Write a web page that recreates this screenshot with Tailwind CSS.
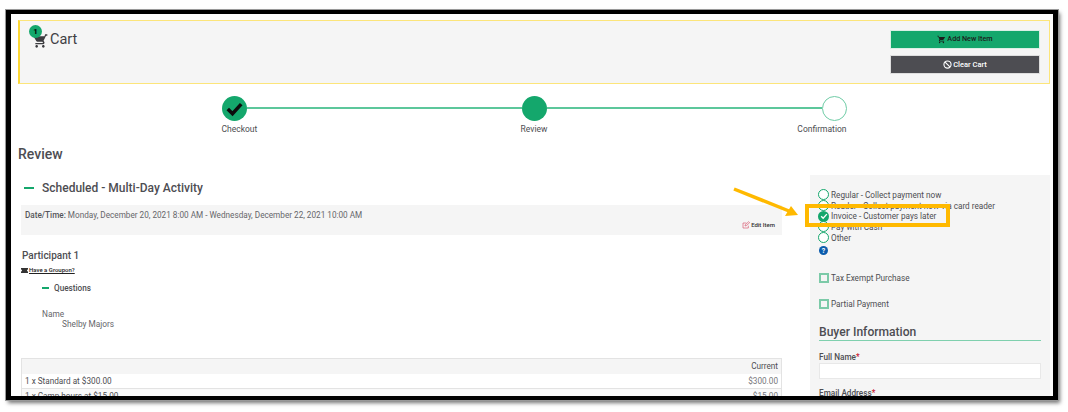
<!DOCTYPE html>
<html lang="en">

<head>
    <meta charset="UTF-8">
    <meta name="viewport" content="width=device-width, initial-scale=1.0">
    <title>Cart - Review</title>
    <script src="https://cdn.jsdelivr.net/npm/@tailwindcss/browser@4"></script>
</head>

<body class="bg-white font-['Roboto',sans-serif] text-[#4d4d52] w-[1068px] h-[412px] overflow-hidden relative">
    <!-- screenshot frame -->
    <div class="absolute left-[6px] top-[10px] w-[1052px] h-[390px] border-x-[5px] border-y-[4px] border-black bg-white overflow-hidden shadow-[2px_3px_4px_rgba(0,0,0,0.55)] outline outline-[#999]">
        <div class="pl-[7px] pr-[3px] pt-[6px]">

            <!-- cart header -->
            <div class="h-[64px] border border-[#fce57a] border-l-2 border-l-[#fdd835] bg-[#f5f5f5] flex justify-between pl-[10px] pr-[9px] pt-[9px]">
                <div class="relative flex items-start pl-[2px] pt-[1px]">
                    <svg class="w-[16px] h-[16px] mt-[2px] fill-[#3c3c40] -scale-x-100" viewBox="0 0 24 24"><path d="M7 18c-1.1 0-2 .9-2 2s.9 2 2 2 2-.9 2-2-.9-2-2-2zM1 2v2h2l3.6 7.6-1.35 2.45C5 15.4 5.8 17 7 17h12v-2H7.4l1-1.9h7.5c.75 0 1.4-.4 1.75-1L21.8 5H5.2l-.9-3H1zm16 16c-1.1 0-2 .9-2 2s.9 2 2 2 2-.9 2-2-.9-2-2-2z"/></svg>
                    <span class="ml-[2px] text-[14.5px] leading-[18px] text-[#3f3f44]">Cart</span>
                    <span class="absolute -left-[1px] -top-[5px] w-[13px] h-[13px] rounded-full bg-[#14a76c] text-[8px] font-bold text-black flex items-center justify-center">1</span>
                </div>
                <div class="w-[150px] flex flex-col gap-[6px]">
                    <div class="h-[19px] bg-[#14a76c] border border-[#d9efe5] flex items-center justify-center gap-[1px] text-[7.2px] font-medium text-[#1b1b1b]">
                        <svg class="w-[9px] h-[9px] fill-[#1b1b1b]" viewBox="0 0 24 24"><path d="M7 18c-1.1 0-2 .9-2 2s.9 2 2 2 2-.9 2-2-.9-2-2-2zM1 2v2h2l3.6 7.6-1.35 2.45C5 15.4 5.8 17 7 17h12v-2H7.4l1-1.9h7.5c.75 0 1.4-.4 1.75-1L21.8 5H5.2l-.9-3H1zm16 16c-1.1 0-2 .9-2 2s.9 2 2 2 2-.9 2-2-.9-2-2-2z"/></svg>
                        Add New Item
                    </div>
                    <div class="h-[19px] bg-[#4d4d52] border border-[#dedede] flex items-center justify-center gap-[1px] text-[7.5px] font-medium text-white">
                        <svg class="w-[9px] h-[9px] fill-none stroke-white stroke-[3]" viewBox="0 0 24 24"><circle cx="12" cy="12" r="9.5"/><path d="M5.5 5.5l13 13"/></svg>
                        Clear Cart
                    </div>
                </div>
            </div>

            <!-- stepper -->
            <div class="flex items-start w-[625px] ml-[203.5px] mt-[12px] text-[8.5px] leading-[10px]">
                <div class="w-[25px] shrink-0 flex flex-col items-start gap-[3px]">
                    <div class="w-[25px] h-[25px] rounded-full bg-[#14a76c] flex items-center justify-center">
                        <svg class="w-[19px] h-[19px] fill-none stroke-[#0c0c0c] stroke-[4.5]" viewBox="0 0 24 24"><path d="M3.5 12.5l6 6L20.5 6.5"/></svg>
                    </div>
                    <span class="whitespace-nowrap">Checkout</span>
                </div>
                <div class="flex-1 h-[2px] mt-[11px] bg-[#5cc79b]"></div>
                <div class="w-[25px] shrink-0 flex flex-col items-center gap-[3px]">
                    <div class="w-[25px] h-[25px] rounded-full bg-[#14a76c]"></div>
                    <span class="whitespace-nowrap">Review</span>
                </div>
                <div class="flex-1 h-[2px] mt-[11px] bg-[#5cc79b]"></div>
                <div class="w-[25px] shrink-0 flex flex-col items-end gap-[3px]">
                    <div class="w-[25px] h-[25px] rounded-full border border-[#6fcca6] bg-white"></div>
                    <span class="whitespace-nowrap">Confirmation</span>
                </div>
            </div>

            <h1 class="text-[14px] leading-[18px] font-medium mt-[11px]">Review</h1>

            <div class="flex items-start mt-[12px]">
                <!-- left column -->
                <div class="w-[761px] ml-[3px] shrink-0">
                    <div class="flex items-center pl-[3px] pt-[4px] h-[22px]">
                        <span class="w-[10px] h-[2px] bg-[#14a76c]"></span>
                        <span class="ml-[8px] text-[12px] font-medium">Scheduled - Multi-Day Activity</span>
                    </div>
                    <div class="h-[30px] mt-[8px] bg-[#f5f5f5] relative pl-[4px] pt-[5px] text-[8.2px] leading-[10px] text-[#66666a]">
                        <b class="font-medium text-[#55555a]">Date/Time:</b> Monday, December 20, 2021 8:00 AM - Wednesday, December 22, 2021 10:00 AM
                        <div class="absolute right-[7px] bottom-[5px] flex items-center gap-[1px] text-[6px] font-medium text-[#333]">
                            <svg class="w-[8px] h-[8px] fill-none stroke-[#d9576f] stroke-[2]" viewBox="0 0 24 24"><path d="M19 14v7H3V6h10"/><path d="M9 15l1-4L20 2l3 3-10 9z"/></svg>
                            Edit Item
                        </div>
                    </div>
                    <div class="text-[10px] leading-[12px] font-medium mt-[15px] ml-[1px]">Participant 1</div>
                    <div class="flex items-center gap-[1px] text-[6px] leading-[8px] font-medium text-[#222] mt-[4px]">
                        <svg class="w-[7px] h-[5px] fill-[#333]" viewBox="0 0 14 10"><path d="M0 0h14v3a2 2 0 000 4v3H0V7a2 2 0 000-4z"/></svg>
                        <span class="underline">Have a Groupon?</span>
                    </div>
                    <div class="flex items-center mt-[9px] ml-[21px] text-[8.2px] leading-[10px] font-medium">
                        <span class="w-[7px] h-[2px] bg-[#14a76c]"></span>
                        <span class="ml-[5px]">Questions</span>
                    </div>
                    <div class="ml-[21px] mt-[16px] text-[8.3px] leading-[10px] text-[#66666a]">
                        <div>Name</div>
                        <div class="ml-[20px]">Shelby Majors</div>
                    </div>
                    <div class="mt-[29px] border border-[#e3e3e3] text-[8.2px]">
                        <div class="h-[15px] bg-[#f5f5f5] flex items-center justify-end pr-[3px]">Current</div>
                        <div class="h-[15px] bg-white flex items-center justify-between px-[3px] border-b border-[#e3e3e3]">
                            <span>1 x Standard at $300.00</span><span class="text-[#77777b]">$300.00</span>
                        </div>
                        <div class="h-[15px] bg-[#f9f9f9] flex items-center justify-between px-[3px]">
                            <span>1 x Camp hours at $15.00</span><span class="text-[#77777b]">$15.00</span>
                        </div>
                    </div>
                </div>

                <!-- payment panel -->
                <div class="w-[240px] ml-[28px] shrink-0 h-[230px] bg-[#f5f5f5] px-[9px] pt-[14.5px] text-[8.2px] leading-[10px]">
                    <div class="flex flex-col -ml-[1px]">
                        <div class="h-[10.7px] flex items-center gap-[2px]"><span class="w-[11px] h-[11px] rounded-full border border-[#14a76c] bg-white"></span>Regular - Collect payment now</div>
                        <div class="h-[10.7px] flex items-center gap-[2px]"><span class="w-[11px] h-[11px] rounded-full border border-[#14a76c] bg-white"></span>Reader - Collect payment now via card reader</div>
                        <div class="h-[10.7px] flex items-center gap-[2px]">
                            <span class="w-[11px] h-[11px] rounded-full bg-[#14a76c] flex items-center justify-center">
                                <svg class="w-[8px] h-[8px] fill-none stroke-white stroke-[4]" viewBox="0 0 24 24"><path d="M3.5 12.5l6 6L20.5 6.5"/></svg>
                            </span>
                            Invoice - Customer pays later
                        </div>
                        <div class="h-[10.7px] flex items-center gap-[2px]"><span class="w-[11px] h-[11px] rounded-full border border-[#14a76c] bg-white"></span>Pay with Cash</div>
                        <div class="h-[10.7px] flex items-center gap-[2px]"><span class="w-[11px] h-[11px] rounded-full border border-[#14a76c] bg-white"></span>Other</div>
                    </div>
                    <div class="w-[9px] h-[9px] mt-[3.5px] rounded-full bg-[#0b5cad] text-white text-[7px] font-bold flex items-center justify-center">?</div>
                    <div class="flex items-center gap-[2px] mt-[18px]"><span class="w-[10px] h-[10px] border-2 border-[#7ccaa8] bg-[#f5f5f5]"></span>Tax Exempt Purchase</div>
                    <div class="flex items-center gap-[2px] mt-[16px]"><span class="w-[10px] h-[10px] border-2 border-[#7ccaa8] bg-[#f5f5f5]"></span>Partial Payment</div>
                    <div class="text-[12.1px] leading-[14px] font-medium mt-[16px] pb-[1px] border-b border-[#7fd0ae]">Buyer Information</div>
                    <div class="mt-[11px] leading-[10px] font-medium">Full Name<span class="text-[#c8102e]">*</span></div>
                    <div class="h-[16px] mt-[1px] bg-white border border-[#e8e8e8]"></div>
                    <div class="mt-[9px] leading-[10px] font-medium">Email Address<span class="text-[#c8102e]">*</span></div>
                </div>
            </div>
        </div>

        <!-- callout drawn over the screenshot -->
        <div class="absolute left-[794px] top-[190px] w-[145px] h-[23px] border-[4px] border-[#ffb900]"></div>
        <svg class="absolute left-[720px] top-[170px] w-[80px] h-[40px]" viewBox="0 0 80 40">
            <path d="M3 5L58 27" stroke="#ffb900" stroke-width="3.5" fill="none"/>
            <path d="M67 31L54 32L60 22z" fill="#ffb900"/>
        </svg>
    </div>
</body>

</html>
